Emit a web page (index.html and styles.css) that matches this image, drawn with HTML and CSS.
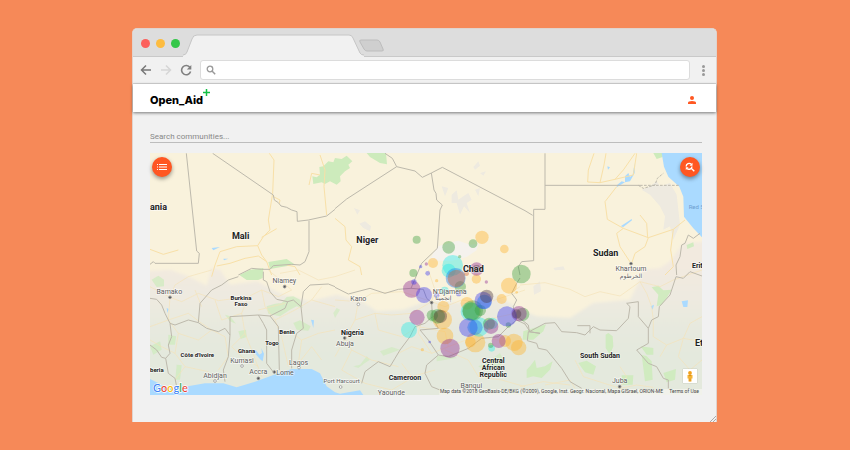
FILE: index.html
```html
<!DOCTYPE html>
<html lang="en">
<head>
<meta charset="utf-8">
<title>Open_Aid</title>
<link rel="stylesheet" href="styles.css">
</head>
<body>
<div class="window">
  <div class="tabstrip">
    <div class="lights"><i class="light red"></i><i class="light amber"></i><i class="light green"></i></div>
    <svg class="tabs" width="204" height="24" viewBox="0 0 204 24" aria-hidden="true">
      <path d="M0 22.500Q3 22 4 19L9 6Q10 2 14 2H166Q169 2 170 5L177 20Q178 22 181 22.500V24H0Z" fill="#f1f1f1"/>
      <path d="M0 22Q3 22 4 19L9 6Q10 2 14 2H166Q169 2 170 5L177 20Q178 22 181 22" fill="none" stroke="#c6c6c6"/>
      <path d="M178 7H194Q196 7 197 9L200 16Q201 18 199 18H184Q182 18 181 16L177 9Q176 7 178 7Z" fill="#cfcfcf" stroke="#bdbdbd"/>
    </svg>
  </div>
  <div class="toolbar">
    <button class="nav" aria-label="Back"><svg width="12" height="12" viewBox="0 0 12 12"><path d="M11 6H2M6 1.500L1.500 6L6 10.500" stroke="#777" stroke-width="1.500" fill="none"/></svg></button>
    <button class="nav" aria-label="Forward"><svg width="12" height="12" viewBox="0 0 12 12"><path d="M1 6H10M6 1.500L10.500 6L6 10.500" stroke="#d6d6d6" stroke-width="1.500" fill="none"/></svg></button>
    <button class="nav" aria-label="Reload"><svg width="12" height="12" viewBox="0 0 12 12"><path d="M10 3.500A4.600 4.600 0 1 0 10.600 7.500" stroke="#808080" stroke-width="1.600" fill="none"/><path d="M11.300 1V5.600H6.800Z" fill="#808080"/></svg></button>
    <label class="address">
      <svg width="10" height="10" viewBox="0 0 10 10" aria-hidden="true"><circle cx="4" cy="4" r="2.800" fill="none" stroke="#999" stroke-width="1.300"/><path d="M6 6L9.200 9.200" stroke="#999" stroke-width="1.500"/></svg>
      <input type="text" aria-label="Address">
    </label>
    <button class="more" aria-label="Menu"><i></i><i></i><i></i></button>
  </div>
  <header class="appbar">
    <a class="logo" href="#">Open_Aid<svg width="7" height="7" viewBox="0 0 7 7" aria-hidden="true"><path d="M3.500 0V7M0 3.500H7" stroke="#12bf45" stroke-width="1.500"/></svg></a>
    <button class="user" aria-label="Account"><svg width="8" height="8" viewBox="0 0 8 8"><circle cx="4" cy="2" r="2" fill="#ff5722"/><path d="M0 8V6.800Q0 5 4 5T8 6.800V8Z" fill="#ff5722"/></svg></button>
  </header>
  <main class="content">
    <input class="search" type="text" placeholder="Search communities..." aria-label="Search communities">
    <section class="map">
      <svg class="canvas" viewBox="0 0 1656 726" preserveAspectRatio="xMidYMid slice">
        <defs>
          <linearGradient id="south" x1="0" y1="340" x2="0" y2="600" gradientUnits="userSpaceOnUse"><stop offset="0" stop-color="#f2eadf"/><stop offset=".35" stop-color="#eeeae0"/><stop offset=".7" stop-color="#e7e9de"/><stop offset="1" stop-color="#e4e9dd"/></linearGradient>
          <filter id="soft"><feGaussianBlur stdDeviation="5"/></filter>
          <filter id="faint"><feGaussianBlur stdDeviation="2"/></filter>
        </defs>
        <rect width="1656" height="726" fill="#f9f2dc"/>
        <path filter="url(#soft)" fill="url(#south)" d="M-20 355L60 350L115 370L170 398L185 345L210 350L240 395L320 385L400 425L480 445L560 425L640 448L680 475L760 470L830 445L960 450L1040 425L1110 470L1160 490L1260 495L1330 450L1440 440L1460 400L1480 350L1530 345L1560 325L1600 270L1680 265V750H-20Z"/>
        <!-- dry lake bed -->
        <path d="M865 280L905 268L925 263L960 275L985 272L980 292L950 312L900 325L840 322L850 300Z" fill="#f5f2ed"/>
        <!-- uplands -->
        <g fill="#eeeae0" filter="url(#faint)">
          <path d="M612 165L630 172L622 185ZM628 212L645 205L663 220L660 235L640 225ZM970 42L985 25L990 38L975 50ZM990 60L1008 55L1000 68ZM875 100L895 105L885 130ZM905 125L920 112L925 140L940 130L955 120L965 140L950 150L960 180L942 160L930 185L920 150L905 150ZM975 110L990 105L985 130ZM1210 345L1240 340L1245 350L1215 352Z"/>
          <path d="M1150 400L1170 385L1173 415L1152 425ZM1475 110L1500 100L1520 85L1530 100L1560 90L1580 125L1590 215L1570 260L1560 220L1540 230L1545 190L1530 160L1500 125Z"/>
        </g>
        <!-- parks and forest -->
        <g fill="#cdebbc">
          <path d="M487 70L500 73L510 65L508 42L520 40L535 25L550 28L555 15L575 18L590 8L607 25L595 35L600 45L585 55L570 70L572 85L560 95L540 85L525 93L515 88L490 93ZM650 0H708L711 34L690 30L660 12Z"/>
          <path d="M268 366L300 350L340 345L338 375L325 381H290ZM355 327L410 318L436 335L425 337L360 348ZM1510 0H1538V12L1520 18Z"/>
          <path d="M5 380L25 368L42 380V400L20 402ZM350 460L375 452L395 450L410 432L430 430L450 440L458 465L440 460L420 470L390 490L355 482ZM430 510L450 502L482 520L475 533L440 530ZM225 485L240 490L258 512L240 505ZM265 535L288 530L290 552L272 558ZM55 545L78 550L75 575H55ZM80 635L95 637L90 680H76ZM0 580L30 565L35 590L10 605Z" opacity=".7"/>
          <path d="M550 480L560 465L570 470L555 495ZM610 640L630 635L650 610L660 620L645 630L625 645ZM690 595L725 582L750 590L700 608ZM830 495L850 490L845 510ZM860 610L905 605L920 615L860 625ZM985 640L1010 630L1050 600L1060 620L1050 645L1010 655Z" opacity=".6"/>
          <path d="M1120 535L1188 514L1180 535L1150 560L1118 560ZM1505 403L1525 398L1540 412L1565 410L1550 435L1535 455L1520 460L1525 425ZM1367 545L1375 540L1388 550L1390 580L1380 605L1367 585ZM1285 630L1310 623L1338 640L1330 665L1305 658ZM1130 650L1140 640L1155 620L1160 645L1185 640L1208 625L1200 650L1175 675L1150 670L1130 675ZM1472 580L1510 585L1510 605L1490 605ZM1475 605L1490 610L1505 625L1508 680L1485 685ZM1540 660L1578 648L1575 680L1550 688ZM1415 667H1450L1448 695H1415ZM1610 276L1630 268L1632 280L1612 288Z" opacity=".9"/>
        </g>
        <g fill="#aadaff">
          <path d="M0 678L25 690L55 708L85 703L105 701L165 691L220 691L260 703L315 686L370 666L425 648L485 648L510 661L530 700L555 718L570 722L630 712L640 726H0Z"/>
          <path d="M1535 0L1542 41L1555 71L1588 101L1600 131L1602 191L1630 226L1656 253V0Z"/>
          <path d="M1595 445L1614 442L1612 462L1600 462ZM1448 65L1454 30V60L1440 85L1425 88L1400 103L1402 95L1415 85L1425 88L1425 70L1435 60L1440 72ZM1372 40L1380 43L1374 50ZM1412 220L1445 198L1446 202L1420 222ZM1502 460L1512 455L1508 470ZM305 590L318 592L328 605L336 600L334 585L342 602L338 625L332 620ZM483 500L492 502L490 525ZM50 465L56 468L52 480ZM185 285L210 282L190 292ZM220 317L235 317L222 322Z"/>
        </g>
        <!-- roads -->
        <g class="roads">
          <g transform="translate(-15 -9)">
            <path d="M373 10L387 30L383 130L370 210L375 240L355 260L338 287L275 290L225 305L210 345L200 380M338 287L350 315L365 335L380 375M350 262L395 236M385 140L405 150L403 160M365 335L340 318L300 325L255 340L215 348M15 298L55 313L100 300M425 345L450 350L465 375M545 195L537 110L540 60L525 15M525 75L500 70L492 105"/>
          </g>
          <g class="south" transform="translate(-15 351)">
            <path d="M15 50L75 82L90 45L130 20L200 0M75 82L110 95L160 70L220 92L310 80L350 60L400 80L440 60L400 25L370 0M75 82L70 150L100 190L90 250L120 290L190 305L205 330M100 190L160 210L200 180L240 200L250 260L220 300M15 170L70 150L130 130L170 160L200 180M310 80L290 130L300 190L320 240L350 320M300 190L260 230L290 260L340 290M350 60L360 110L390 150L410 200L430 290M390 150L450 120L500 90L570 110M430 180L470 210L520 190L570 180M470 210L460 280L500 230L530 270M405 10L460 0L520 30L570 20M210 90L230 150L290 130M120 290L90 330M500 90L530 50M15 210L50 230L90 250M170 110L150 60M340 120L420 100"/>
          </g>
          <g transform="translate(555 -9)">
            <path d="M0 205L30 230L33 270L50 290L40 330L75 350L80 375"/>
          </g>
          <g class="south" transform="translate(555 351)">
            <path d="M0 20L60 0M0 90L70 95L110 70L200 65L290 95L330 110L380 90L450 100L570 60M70 95L60 150L30 205L50 240L110 270L190 290M60 150L120 130L170 135L230 130L290 95M120 130L130 180L200 200L250 170L330 185L340 230L290 250L230 230L190 250M30 205L0 260M50 240L20 300L90 340L170 360L220 330M330 240L400 270L430 320L500 330L570 350M340 230L420 200L490 210M420 200L450 150L540 130M260 150L250 190L290 250M280 0L300 60L290 95M200 280L230 320L300 300"/>
          </g>
          <g transform="translate(1110 -9)">
            <path d="M222 10L205 60L203 96L240 98L285 88L310 60L345 10M240 98L252 45L258 10M290 110L255 155L262 208L310 235L385 263L460 238L495 210M310 235L290 250L300 290L333 340M385 263L375 290L345 310L335 340M383 263L380 220L360 195M460 238L452 300L460 350L435 375M285 88L340 75L350 10"/>
          </g>
          <g class="south" transform="translate(1110 351)">
            <path d="M0 45L75 38L150 58L195 80L240 65L300 78L360 35L380 70L395 110L400 150L400 200L440 225L490 205L546 215M360 35L420 50L460 30L546 0M0 50L-30 70M490 205L510 160L546 140M490 205L475 260L510 300L546 270M440 225L420 260M75 345L150 330L165 355M300 355L320 320L300 290M300 355L350 345L400 352M165 270L190 320L300 355M0 350L70 335L150 345"/>
          </g>
        </g>
        <!-- national borders -->
        <g class="borders">
          <path transform="translate(-15 -9)" d="M124 10L155 303L163 310L160 340H30L25 335L15 343M203 10L385 135L388 150L400 158L408 168L425 172L440 180L456 185L457 214L490 210L545 198L570 178M492 212V305L480 335L465 345L440 343L385 347L375 358L350 358L320 355L280 375"/>
          <path transform="translate(555 -9)" d="M0 176L35 147L185 50L172 25L150 10M185 50L240 63L262 82L289 69L322 52L570 182L593 196M289 69L297 120L303 130L305 150L322 165L315 180L307 295L260 340L245 375L228 415"/>
          <path transform="translate(1110 -9)" d="M75 10V178H41V332L5 335L-5 350L0 375M75 106H360M540 250L520 265L505 255L495 280L485 285L480 320L468 345L470 375"/>
          <path transform="translate(1110 -9)" stroke-dasharray="8 4" d="M355 106L370 115L405 105L412 85L430 70M360 106H480"/>
          <path transform="translate(-15 351)" d="M15 85L35 88L50 105L60 130L75 160L90 165L130 150L160 158L165 100L200 60L230 45L250 30L280 20M75 160L80 200L70 225L75 250L62 265L50 262L35 240L15 225M62 265L70 310L90 325L95 350M160 158L185 175L220 185L240 175L255 195L250 260L235 300L240 335M255 195V140L340 135L355 160L365 180L365 280L388 310M340 135L375 138L400 170L403 300M375 138L420 115L428 95L395 88L375 65L365 35L355 30V5M428 95L445 90L468 110L475 175L455 190L440 240V295M468 110L475 65L495 45L550 42L570 50"/>
          <path transform="translate(555 351)" d="M0 52L40 72L105 55L150 70L190 58L228 55L265 58L275 85L290 98L292 140L270 160L240 170L225 200L195 240L180 265L165 290L130 275L90 305L80 340M292 140L310 175L255 180L280 210L310 255L275 285L270 310L290 350L315 360M310 255L340 260L400 235L440 205L490 200L520 170L545 150L535 110L545 90L530 70L545 40L555 24M545 150L570 162L585 185"/>
          <path transform="translate(1110 351)" d="M0 145L25 165L28 185L60 190L25 185L22 212L50 220L55 235L80 240L125 295L150 335L185 355M28 185L75 160L105 158L125 185L170 188L195 195L220 170L240 180L290 182L325 145L330 110L320 100L355 95V140L385 175V220L350 240L385 280L410 290L430 325L445 330V355M385 175L395 150L415 140L418 110L450 75L468 20L490 25L510 5L546 18M172 167H210V190"/>
        </g>
        <!-- communities -->
        <g class="dots" transform="translate(735 216)">
          <g fill="#ffb127"><circle cx="261" cy="37" r="20"/><circle cx="328" cy="72" r="13"/><circle cx="114" cy="114" r="15"/><circle cx="125" cy="167" r="5"/><circle cx="244" cy="162" r="14"/><circle cx="342" cy="182" r="24"/><circle cx="320" cy="222" r="15"/><circle cx="216" cy="235" r="19"/><circle cx="145" cy="245" r="18"/><circle cx="142" cy="284" r="29"/><circle cx="150" cy="333" r="25"/><circle cx="226" cy="351" r="16"/><circle cx="241" cy="352" r="30"/><circle cx="330" cy="348" r="18"/><circle cx="357" cy="352" r="26"/><circle cx="371" cy="368" r="23"/><circle cx="82" cy="374" r="5"/><circle cx="365" cy="202" r="4"/></g>
          <g fill="#21ece9"><circle cx="173" cy="121" r="31"/><circle cx="161" cy="137" r="21"/><circle cx="42" cy="315" r="24"/><circle cx="149" cy="197" r="12"/><circle cx="252" cy="306" r="29"/><circle cx="225" cy="260" r="28"/><circle cx="290" cy="370" r="10"/><circle cx="292" cy="295" r="17"/></g>
          <g fill="#399d3d"><circle cx="65" cy="44" r="12"/><circle cx="161" cy="67" r="19"/><circle cx="234" cy="56" r="13"/><circle cx="194" cy="95" r="5"/><circle cx="55" cy="144" r="12"/><circle cx="379" cy="147" r="28"/><circle cx="196" cy="185" r="17"/><circle cx="112" cy="271" r="17"/><circle cx="128" cy="274" r="22"/><circle cx="233" cy="257" r="31"/><circle cx="230" cy="259" r="27"/><circle cx="256" cy="256" r="17"/><circle cx="383" cy="268" r="20"/><circle cx="287" cy="361" r="8"/><circle cx="282" cy="296" r="18"/><circle cx="340" cy="300" r="8"/></g>
          <g fill="#8d248f"><circle cx="50" cy="192" r="26"/><circle cx="245" cy="132" r="20"/><circle cx="66" cy="277" r="23"/><circle cx="165" cy="370" r="29"/><circle cx="288" cy="305" r="22"/><circle cx="311" cy="348" r="21"/><circle cx="372" cy="266" r="23"/><circle cx="94" cy="117" r="5"/><circle cx="274" cy="171" r="5"/></g>
          <g fill="#3734ef"><circle cx="87" cy="210" r="24"/><circle cx="77" cy="125" r="5"/><circle cx="98" cy="145" r="7"/><circle cx="57" cy="171" r="8"/><circle cx="191" cy="206" r="8"/><circle cx="220" cy="308" r="28"/><circle cx="336" cy="274" r="30"/><circle cx="265" cy="226" r="26"/><circle cx="104" cy="351" r="4"/><circle cx="125" cy="211" r="8"/></g>
          <g fill="#1674ee"><circle cx="182" cy="159" r="30"/><circle cx="240" cy="307" r="23"/><circle cx="268" cy="231" r="22"/></g>
          <g fill="#d0602c"><circle cx="184" cy="160" r="26"/><circle cx="214" cy="145" r="8"/></g>
          <g fill="#49323c"><circle cx="275" cy="214" r="20"/><circle cx="136" cy="274" r="20"/><circle cx="245" cy="132" r="12"/><circle cx="365" cy="267" r="14"/></g>
        </g>
        <g class="cities">
          <circle cx="60" cy="433" r="4"/><circle cx="404" cy="401" r="4"/><circle cx="325" cy="676" r="4"/><circle cx="373" cy="657" r="4"/><circle cx="584" cy="555" r="4"/><circle cx="845" cy="449" r="4"/><circle cx="1443" cy="332" r="4"/><circle cx="1409" cy="701" r="4"/>
        </g>
        <g class="towns"><circle cx="276" cy="639" r="4"/><circle cx="195" cy="684" r="4"/><circle cx="447" cy="644" r="4"/><circle cx="625" cy="454" r="4"/><circle cx="572" cy="702" r="4"/></g>
        <!-- place names -->
        <g class="city">
          <text x="58" y="422">Bamako</text><text x="403" y="391">Niamey</text><text x="276" y="630">Kumasi</text><text x="195" y="674">Abidjan</text><text x="325" y="664">Accra</text><text x="405" y="665">Lome</text><text x="446" y="635">Lagos</text><text x="625" y="445">Kano</text><text x="585" y="579">Abuja</text><text x="575" y="690" class="tiny">Port Harcourt</text><text x="724" y="725">Yaounde</text><text x="964" y="705">Bangui</text><text x="899" y="422">N'Djamena</text><text x="880" y="441" class="tiny">إنجمينا</text><text x="1443" y="354">Khartoum</text><text x="1443" y="375" class="tiny">الخرطوم</text><text x="1409" y="690">Juba</text>
        </g>
        <g class="country">
          <text x="272" y="258">Mali</text><text x="652" y="271">Niger</text><text x="970" y="358">Chad</text><text x="1367" y="310">Sudan</text>
          <text x="0" y="170" class="start">ania</text><text x="1626" y="344" class="start mid">Eritrea</text><text x="1635" y="580" class="start">Ethiopia</text>
        </g>
        <g class="country mid"><text x="607" y="545">Nigeria</text><text x="765" y="680">Cameroon</text><text x="1350" y="616">South Sudan</text><text x="1030" y="630">Central</text><text x="1030" y="650">African</text><text x="1030" y="671">Republic</text></g>
        <g class="country small"><text x="273" y="442">Burkina</text><text x="273" y="459">Faso</text><text x="411" y="543">Benin</text><text x="366" y="577">Togo</text><text x="290" y="600">Ghana</text><text x="142" y="612">Côte d'Ivoire</text><text x="0" y="656" class="start">beria</text></g>
        <text class="sea" x="1616" y="167">Red Sea</text>
        <rect x="868" y="708" width="788" height="18" fill="#f4f4ef" opacity=".8"/>
        <text class="credit" x="870" y="721">Map data ©2018 GeoBasis-DE/BKG (©2009), Google, Inst. Geogr. Nacional, Mapa GISrael, ORION-ME</text>
        <a href="#"><text class="credit" x="1558" y="721">Terms of Use</text></a>
        <text class="google" x="9" y="716"><tspan fill="#4285f4">G</tspan><tspan fill="#ea4335">o</tspan><tspan fill="#fbbc05">o</tspan><tspan fill="#4285f4">g</tspan><tspan fill="#34a853">l</tspan><tspan fill="#ea4335">e</tspan></text>
      </svg>
      <button class="fab list" aria-label="Show list"><svg width="10" height="6" viewBox="0 0 10 6"><path d="M0 .5H1M2 .5H10M0 3H1M2 3H10M0 5.500H1M2 5.500H10" stroke="#fff"/></svg></button>
      <button class="fab find" aria-label="Search this area"><svg width="10" height="10" viewBox="0 0 10 10"><path d="M1.200 4.500A3 3 0 0 1 6.300 2.300M7 4.500A3 3 0 0 1 2 6.500M6 6L9.300 9.300" fill="none" stroke="#fff" stroke-width="1.400"/><path d="M7.500 .8V3.800H4.500ZM.8 8V5.200H3.600Z" fill="#fff"/></svg></button>
      <button class="pegman" aria-label="Street View"><svg width="8" height="11" viewBox="0 0 8 11"><circle cx="4" cy="2" r="1.900" fill="#f2a11c"/><path d="M1.500 4H6.500V7.500H5.500V10.500H2.500V7.500H1.500Z" fill="#f5b335"/><path d="M2.500 4.200H5.500L4 5.200ZM3.700 7.500H4.300V10.500H3.700Z" fill="#c57d12"/></svg></button>
    </section>
  </main>
  <svg class="grip" width="6" height="6" viewBox="0 0 6 6" aria-hidden="true"><path d="M0 6L6 0M3 6L6 3" stroke="#aaa"/></svg>
</div>
</body>
</html>
```
FILE: styles.css
```css
* { box-sizing: border-box; }
body {
  margin: 0;
  min-height: 100vh;
  padding: 28px 133px 28px 132px;
  background: #f68958;
  font-family: Roboto, sans-serif;
}
button { border: 0; padding: 0; background: none; display: flex; align-items: center; justify-content: center; }
svg { display: block; }
input { border: 0; outline: 0; padding: 0; background: none; font-family: inherit; min-width: 0; }

.window { position: relative; background: #f1f1f1; border-radius: 5px 5px 0 0; border: 1px solid #e0d3cd; border-width: 1px 1px 0; }
.tabstrip { display: flex; align-items: flex-end; height: 28px; background: #ddd; border-bottom: 1px solid #c9c9c9; border-radius: 4px 4px 0 0; }
.lights { display: flex; gap: 6px; padding: 0 3px 8px 8px; }
.light { width: 9px; height: 9px; border-radius: 50%; }
.red { background: #fc605c; }
.amber { background: #fdbc40; }
.green { background: #34c749; }
.tabs { margin-bottom: -1px; }

.toolbar { display: flex; align-items: center; gap: 8px; height: 27px; padding: 0 11px 0 7px; border-bottom: 1px solid #d8d8d8; }
.nav { width: 12px; height: 20px; }
.address { flex: 1; display: flex; align-items: center; gap: 4px; height: 20px; padding: 0 5px; background: #fff; border: 1px solid #dcdcdc; border-radius: 3px; }
.address input { flex: 1; font-size: 9px; }
.more { flex-direction: column; gap: 1px; margin-left: 4px; }
.more i { width: 3px; height: 3px; border-radius: 50%; background: #999; }

.appbar { display: flex; align-items: center; justify-content: space-between; height: 28px; padding: 4px 20px 0 17px; background: #fff; box-shadow: 0 1px 3px rgba(0, 0, 0, .5); }
.logo { display: flex; color: #000; font: 800 11px/14px Inter, sans-serif; text-decoration: none; }
.logo svg { margin-top: -4px; }

.content { padding: 18px 14px 27px 17px; }
.search { display: block; width: 100%; height: 13px; border-bottom: 1px solid #bdbdbd; color: #777; font-size: 8px; line-height: 12px; }
.search::placeholder { color: #888; opacity: 1; }
.map { position: relative; margin-top: 10px; }
.canvas { width: 100%; aspect-ratio: 1656 / 726; font-family: Roboto, "DejaVu Sans", sans-serif; }

.roads { fill: none; stroke: #f8e0a8; stroke-width: 3; stroke-linejoin: round; }
.roads .south { stroke: #f4e2b8; stroke-width: 2; }
.borders { fill: none; stroke: #bdb9ac; stroke-width: 3; stroke-linejoin: round; }
.cities circle { fill: #555; stroke: #999; stroke-width: 3; }
.towns circle { fill: #fff; stroke: #888; stroke-width: 2; }
.city, .country { text-anchor: middle; paint-order: stroke; stroke: rgba(255, 255, 255, .6); stroke-width: 4; }
.city { fill: #5e5e5e; font-size: 21px; }
.city .tiny { font-size: 18px; }
.country { fill: #222; font-size: 27px; font-weight: 700; }
.country.mid, .country .mid { font-size: 21px; }
.country.small { font-size: 18px; }
.country .start, .country.start { text-anchor: start; }
.sea { fill: #6d9ed0; font-size: 18px; }
.dots { fill-opacity: .4; }
.credit { fill: #444; font-size: 15px; }
.google { font: 500 33px Lato, sans-serif; paint-order: stroke; stroke: #fff; stroke-width: 4; }

.fab { position: absolute; top: 4px; width: 20px; height: 20px; border-radius: 50%; background: #ff5722; box-shadow: 0 2px 4px rgba(0, 0, 0, .4); }
.list { left: 2px; }
.find { right: 2px; }
.pegman { position: absolute; right: 5px; bottom: 12px; width: 14px; height: 14px; background: #fff; box-shadow: 0 0 1px rgba(0, 0, 0, .3); }
.grip { position: absolute; right: 0; bottom: 0; }
```
